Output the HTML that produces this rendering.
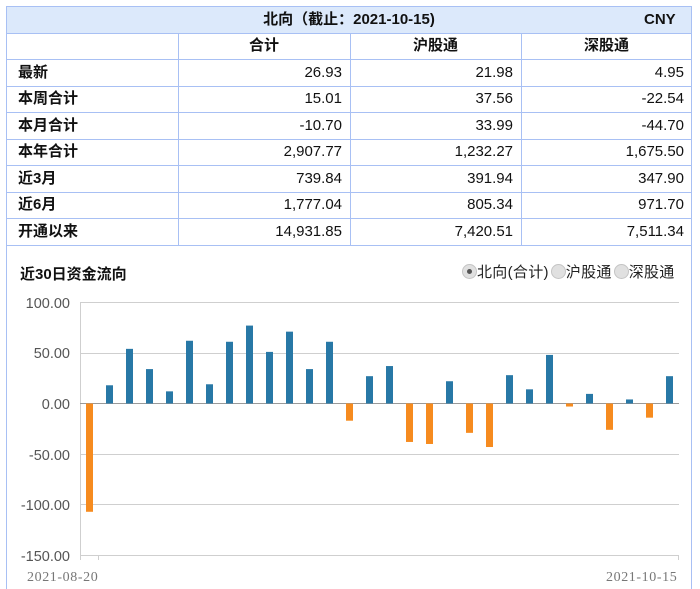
<!DOCTYPE html>
<html><head><meta charset="utf-8"><style>
body{margin:0;width:700px;height:589px;background:#fff;font-family:"Liberation Sans","Noto Sans CJK SC",sans-serif;position:relative;overflow:hidden}
.b{position:absolute;background:#a8c0f4}
.t{position:absolute;font-size:15px;color:#111;line-height:26px}
.hd{font-weight:bold}
.r{display:inline-block;width:13px;height:13px;border-radius:50%;background:#e0e0e0;border:1px solid #c4c4c4;vertical-align:-2px;position:relative;margin-left:2px}
</style></head><body>
<div style="position:absolute;left:7px;top:7px;width:684px;height:26px;background:#dce9fb"></div>
<div class="b" style="left:6px;top:6px;width:686px;height:1px"></div>
<div class="b" style="left:6px;top:6px;width:1px;height:583px"></div>
<div class="b" style="left:691px;top:6px;width:1px;height:583px"></div>
<div class="b" style="left:6px;top:33px;width:686px;height:1px"></div>
<div class="b" style="left:6px;top:59px;width:686px;height:1px"></div>
<div class="b" style="left:6px;top:86px;width:686px;height:1px"></div>
<div class="b" style="left:6px;top:112px;width:686px;height:1px"></div>
<div class="b" style="left:6px;top:139px;width:686px;height:1px"></div>
<div class="b" style="left:6px;top:165px;width:686px;height:1px"></div>
<div class="b" style="left:6px;top:192px;width:686px;height:1px"></div>
<div class="b" style="left:6px;top:218px;width:686px;height:1px"></div>
<div class="b" style="left:6px;top:245px;width:686px;height:1px"></div>
<div class="b" style="left:178px;top:33px;width:1px;height:212px"></div>
<div class="b" style="left:350px;top:33px;width:1px;height:212px"></div>
<div class="b" style="left:521px;top:33px;width:1px;height:212px"></div>
<div class="t hd" style="left:6px;top:7px;width:686px;text-align:center">北向（截止：2021-10-15)</div>
<div class="t hd" style="left:644px;top:7px">CNY</div>
<div class="t hd" style="left:178px;top:33px;width:172px;text-align:center">合计</div>
<div class="t hd" style="left:350px;top:33px;width:171px;text-align:center">沪股通</div>
<div class="t hd" style="left:521px;top:33px;width:171px;text-align:center">深股通</div>
<div id="rows"></div>
<div class="t hd" style="left:20px;top:262px">近30日资金流向</div>
<div class="t" style="left:460px;top:260px;color:#222;letter-spacing:0.3px">
<span class="r"><span style="position:absolute;left:4px;top:4px;width:5px;height:5px;border-radius:50%;background:#555"></span></span>北向(合计)<span class="r"></span>沪股通<span class="r"></span>深股通</div>
<svg style="position:absolute;left:0;top:0" width="700" height="589" id="ch">
<g stroke="#cfcfcf" stroke-width="1">
<line x1="80" x2="679" y1="302.5" y2="302.5"/><line x1="80" x2="679" y1="353.5" y2="353.5"/>
<line x1="80" x2="679" y1="454.5" y2="454.5"/><line x1="80" x2="679" y1="504.5" y2="504.5"/>
<line x1="80" x2="679" y1="555.5" y2="555.5"/><line x1="80.5" x2="80.5" y1="302" y2="560"/>
<line x1="98.5" x2="98.5" y1="555" y2="560"/><line x1="678.5" x2="678.5" y1="555" y2="560"/>
</g>
<line x1="80" x2="679" y1="403.5" y2="403.5" stroke="#999"/>
<g font-family="Liberation Sans" font-size="14.5" fill="#555" text-anchor="end">
<text x="70" y="308">100.00</text><text x="70" y="358">50.00</text><text x="70" y="409">0.00</text>
<text x="70" y="460">-50.00</text><text x="70" y="510">-100.00</text><text x="70" y="561">-150.00</text></g>
<g font-family="Liberation Serif" font-size="14" fill="#777" letter-spacing="0.6">
<text x="27" y="581">2021-08-20</text><text x="606" y="581">2021-10-15</text></g>
<g id="bars"></g>
</svg>
<script>
var rows=[["最新","26.93","21.98","4.95"],["本周合计","15.01","37.56","-22.54"],["本月合计","-10.70","33.99","-44.70"],["本年合计","2,907.77","1,232.27","1,675.50"],["近3月","739.84","391.94","347.90"],["近6月","1,777.04","805.34","971.70"],["开通以来","14,931.85","7,420.51","7,511.34"]];
var tops=[60,86,113,139,166,192,219],h='';
rows.forEach(function(r,i){var t=tops[i];
h+='<div class="t hd" style="left:18px;top:'+t+'px">'+r[0]+'</div>';
[[178,350],[350,521],[521,692]].forEach(function(c,j){h+='<div class="t" style="left:'+c[0]+'px;width:'+(c[1]-c[0]-8)+'px;top:'+t+'px;text-align:right">'+r[j+1]+'</div>';});});
document.getElementById('rows').innerHTML=h;
var v=[-107,18,54,34,12,62,19,61,77,51,71,34,61,-17,27,37,-38,-40,22,-29,-43,28,14,48,-3,9.5,-26,4,-14,27],s='';
v.forEach(function(x,i){var cx=89.5+i*20,hh=Math.abs(x)*1.012,y=x>0?403.5-hh:403.5;
s+='<rect x="'+(cx-3.5)+'" y="'+y+'" width="7" height="'+hh+'" fill="'+(x>0?'#2878a6':'#f68b1f')+'"/>';});
document.getElementById('bars').innerHTML=s;
</script>
</body></html>
